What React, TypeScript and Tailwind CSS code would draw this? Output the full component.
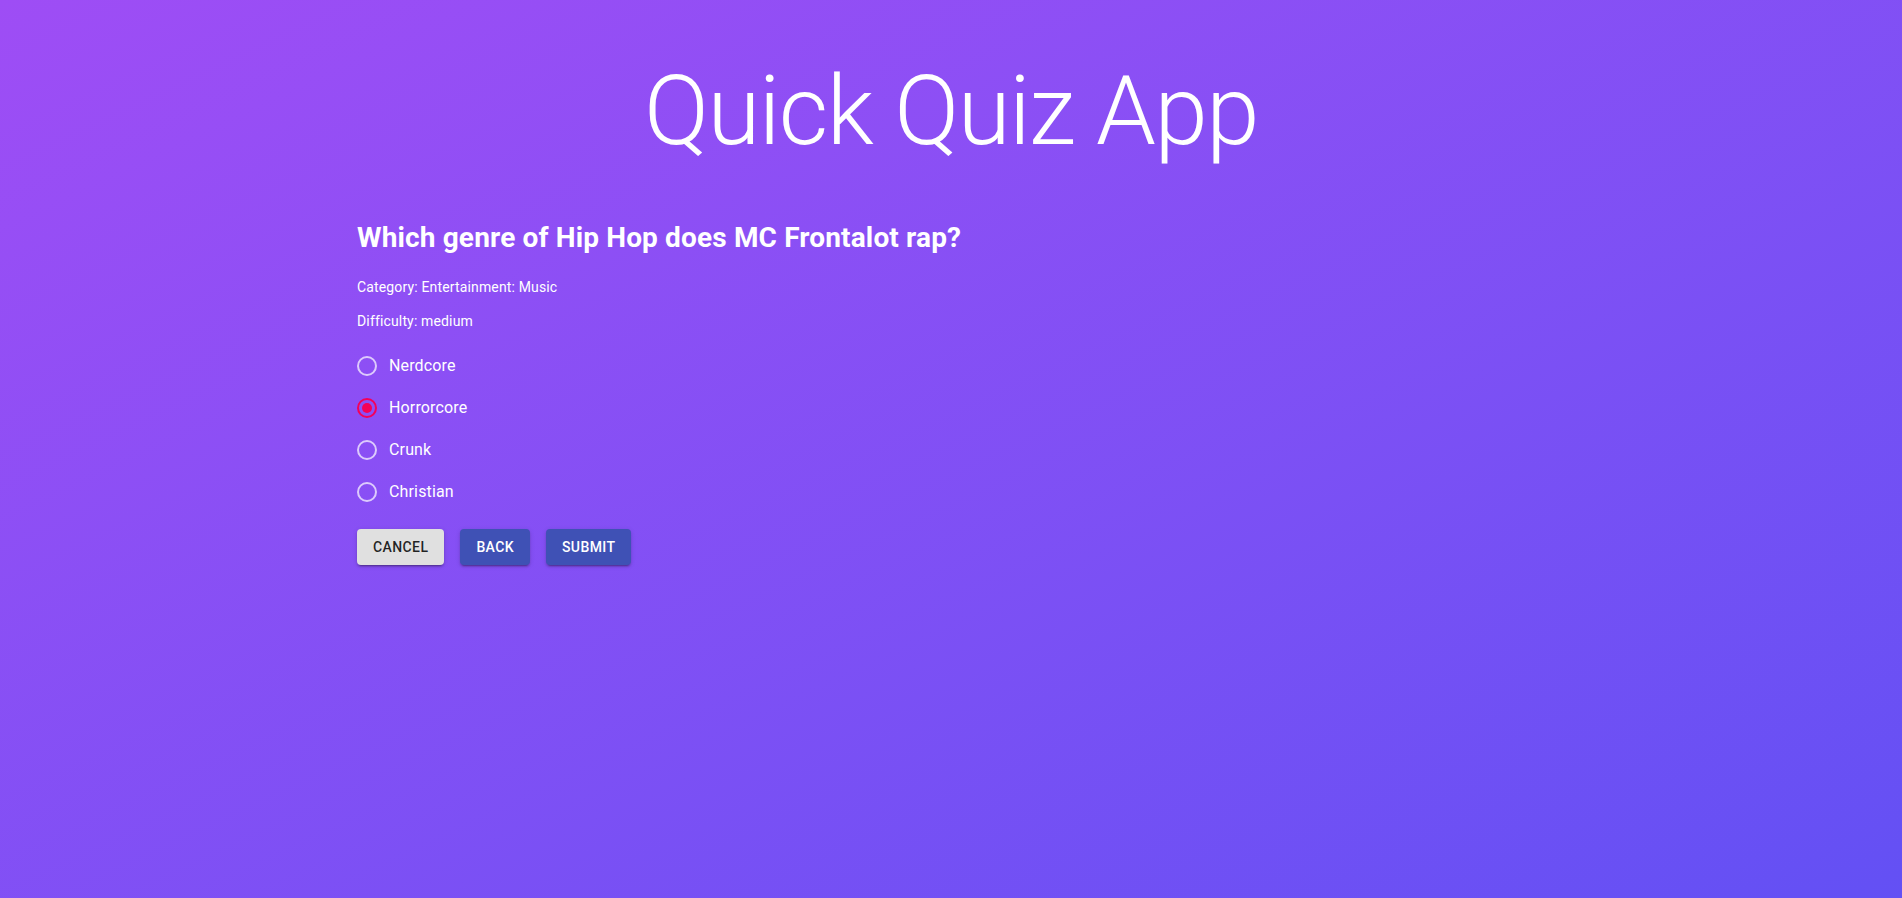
const answers = ["Nerdcore", "Horrorcore", "Crunk", "Christian"];

function RadioRow({ label, checked }: { label: string; checked?: boolean }) {
  return (
    <label className="flex h-[42px] items-center">
      <span
        className={
          checked
            ? "flex h-[20px] w-[20px] items-center justify-center rounded-full border-2 border-[#f50057]"
            : "flex h-[20px] w-[20px] items-center justify-center rounded-full border-2 border-white/70"
        }
      >
        {checked && <span className="h-[10px] w-[10px] rounded-full bg-[#f50057]" />}
      </span>
      <span className="ml-[12px] text-[16px] leading-[24px] tracking-[0.15px] text-white">{label}</span>
    </label>
  );
}

export default function App() {
  return (
    <div className="min-h-screen bg-gradient-to-br from-[#9e4df5] to-[#6350f4] font-['Roboto',sans-serif] text-white">
      {/* Title */}
      <h1 className="pt-[55px] text-center text-[96px] font-light leading-[112px] tracking-[-1.5px]">
        Quick Quiz App
      </h1>

      {/* Question card */}
      <div className="mx-auto w-[1188px] pt-[55px]">
        <h2 className="text-[28px] font-bold leading-[32px] tracking-[0.15px]">
          Which genre of Hip Hop does MC Frontalot rap?
        </h2>
        <p className="mt-[23px] text-[14px] leading-[20px] tracking-[0.15px]">Category: Entertainment: Music</p>
        <p className="mt-[14px] text-[14px] leading-[20px] tracking-[0.15px]">Difficulty: medium</p>

        <div className="mt-[14px] flex flex-col">
          {answers.map((a) => (
            <RadioRow key={a} label={a} checked={a === "Horrorcore"} />
          ))}
        </div>

        {/* Actions */}
        <div className="mt-[16px] flex gap-[16px]">
          <button className="h-[36px] min-w-[64px] rounded-[4px] bg-[#e0e0e0] px-[16px] text-[14px] font-medium uppercase tracking-[0.4px] text-black/85 shadow-[0_3px_1px_-2px_rgba(0,0,0,0.2),0_2px_2px_0_rgba(0,0,0,0.14),0_1px_5px_0_rgba(0,0,0,0.12)]">
            Cancel
          </button>
          <button className="h-[36px] min-w-[64px] rounded-[4px] bg-[#3f51b5] px-[16px] text-[14px] font-medium uppercase tracking-[0.4px] text-white shadow-[0_3px_1px_-2px_rgba(0,0,0,0.2),0_2px_2px_0_rgba(0,0,0,0.14),0_1px_5px_0_rgba(0,0,0,0.12)]">
            Back
          </button>
          <button className="h-[36px] min-w-[64px] rounded-[4px] bg-[#3f51b5] px-[16px] text-[14px] font-medium uppercase tracking-[0.4px] text-white shadow-[0_3px_1px_-2px_rgba(0,0,0,0.2),0_2px_2px_0_rgba(0,0,0,0.14),0_1px_5px_0_rgba(0,0,0,0.12)]">
            Submit
          </button>
        </div>
      </div>
    </div>
  );
}
